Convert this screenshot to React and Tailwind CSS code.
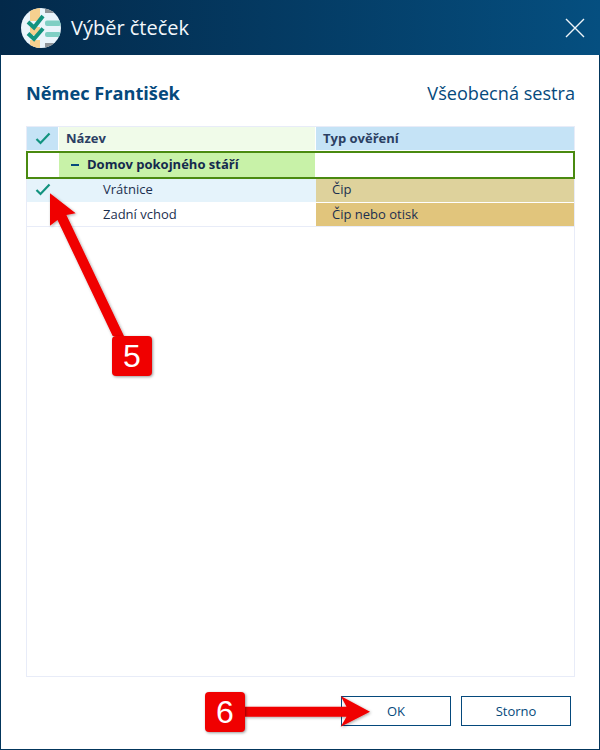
const font = { fontFamily: '"Open Sans", sans-serif' };

const Check = ({ className = '' }) => (
  <svg width="16" height="13" viewBox="0 0 16 13" fill="none" className={className}>
    <path d="M1.5 7 L5.5 11 L14.5 1.5" stroke="#12937f" strokeWidth="2.2" />
  </svg>
);

const Logo = () => (
  <svg width="40" height="40" viewBox="0 0 40 40">
    <defs>
      <clipPath id="logoClip">
        <circle cx="20" cy="20" r="20" />
      </clipPath>
    </defs>
    <g clipPath="url(#logoClip)">
      <rect width="40" height="40" fill="#eaf4fb" />
      <rect x="9" y="0" width="10" height="13" fill="#f6d08f" />
      <rect x="9" y="19" width="10" height="8" fill="#f6d08f" />
      <rect x="9" y="32" width="10" height="8" fill="#f6d08f" />
      <rect x="24" y="0" width="16" height="5" fill="#8f9499" />
      <rect x="24" y="12.5" width="16" height="5.5" rx="2" fill="#7fcfc4" />
      <rect x="24" y="24" width="16" height="5" rx="2" fill="#7fcfc4" />
      <rect x="24" y="35" width="16" height="5" fill="#8f9499" />
      <path d="M7 14 L13 19.5 L22 8" stroke="#12937f" strokeWidth="4" fill="none" />
      <path d="M7 25.5 L13 31 L22 20.5" stroke="#12937f" strokeWidth="4" fill="none" />
    </g>
  </svg>
);

const Arrows = () => (
  <svg width="600" height="750" viewBox="0 0 600 750" className="absolute left-0 top-0 pointer-events-none">
    <defs>
      <filter id="arrowShadow" x="-20%" y="-20%" width="140%" height="140%">
        <feDropShadow dx="1" dy="1" stdDeviation="1.5" floodColor="#000" floodOpacity="0.35" />
      </filter>
    </defs>
    <path
      d="M50 193.3 L75.7 213.3 L66.4 215 L124 336 L112.7 336 L57.5 220 L50 225.7 Z"
      fill="#f00000"
      filter="url(#arrowShadow)"
    />
    <path
      d="M245 706.7 L346.5 706.7 L340.7 696 L370 711.7 L340.7 726.7 L346.5 716.7 L245 716.7 Z"
      fill="#f00000"
      filter="url(#arrowShadow)"
    />
  </svg>
);

const Badge = ({ className, children }) => (
  <div
    className={`absolute w-10 h-10 flex items-center justify-center rounded-sm bg-[#f00000] text-white text-[32px] shadow-[1px_1px_3px_rgba(0,0,0,0.4)] ${className}`}
    style={{ fontFamily: '"Liberation Sans", sans-serif' }}
  >
    {children}
  </div>
);

export default function App() {
  return (
    <div className="relative w-[600px] h-[750px] bg-white overflow-hidden flex flex-col" style={font}>
      {/* Title bar */}
      <div className="h-[55px] shrink-0 flex items-center justify-between pl-[21px] pr-[15px] bg-gradient-to-r from-[#03294a] to-[#054f80]">
        <div className="flex items-center gap-[10px]">
          <Logo />
          <span className="text-[20px] text-[#f2f7fb]">Výběr čteček</span>
        </div>
        <svg width="20" height="20" viewBox="0 0 20 20" fill="none">
          <path d="M1 1 L19 19 M19 1 L1 19" stroke="#eef4f8" strokeWidth="1.4" />
        </svg>
      </div>

      {/* Body */}
      <div className="flex-1 flex flex-col pl-[25px] pr-[24px] pb-[23px] border-x border-b border-[#03365c]">
        <div className="h-[71px] shrink-0 pt-[6px] flex items-center justify-between">
          <span className="text-[18.2px] font-bold text-[#05497c]">Němec František</span>
          <span className="text-[18.13px] text-[#05497c]">Všeobecná sestra</span>
        </div>

        {/* Table */}
        <div className="h-[551px] shrink-0 border border-[#e8ecf8] text-[13px] text-[#1c2f4f]">
          <div className="flex h-[23px] font-bold text-[#2b3f63] mb-px">
            <div className="w-[31px] mr-px bg-[#c5e3f6] flex items-center justify-center">
              <Check />
            </div>
            <div className="w-[256px] mr-px bg-[#f0fbe9] flex items-center pl-[7px]">Název</div>
            <div className="flex-1 bg-[#c5e3f6] flex items-center pl-[7px]">Typ ověření</div>
          </div>

          <div className="flex h-[28px] -mx-px border-2 border-[#4a8a10] font-bold text-[#14294d]">
            <div className="w-[30px] mr-px bg-white" />
            <div className="w-[256px] mr-px bg-[#c8f2a8] flex items-center pl-[12px] gap-[8px]">
              <span className="w-[8px] h-[2px] bg-[#05497c]" />
              <span>Domov pokojného stáří</span>
            </div>
            <div className="flex-1 bg-white" />
          </div>

          <div className="flex h-[23px] bg-[#e5f3fb] mb-px">
            <div className="w-[31px] mr-px flex items-center justify-center">
              <Check className="-translate-y-px" />
            </div>
            <div className="w-[256px] mr-px flex items-center pl-[44px] pb-[2px]">Vrátnice</div>
            <div className="flex-1 bg-[#ded29c] flex items-center pl-[16px] pb-[2px]">Čip</div>
          </div>

          <div className="flex h-[24px] border-b border-[#e8ecf8]">
            <div className="w-[31px] mr-px" />
            <div className="w-[256px] mr-px flex items-center pl-[44px]">Zadní vchod</div>
            <div className="flex-1 bg-[#e1c57c] flex items-center pl-[16px]">Čip nebo otisk</div>
          </div>
        </div>

        {/* Buttons */}
        <div className="flex-1 flex items-end justify-end gap-[10px] pr-[4px]">
          <button className="w-[110px] h-[30px] pt-[2px] border border-[#05497c] text-[13px] text-[#05497c]">OK</button>
          <button className="w-[110px] h-[30px] pt-[2px] border border-[#05497c] text-[13px] text-[#05497c]">Storno</button>
        </div>
      </div>

      {/* Annotations */}
      <Arrows />
      <Badge className="left-[112px] top-[336px]">5</Badge>
      <Badge className="left-[205px] top-[692px]">6</Badge>
    </div>
  );
}
